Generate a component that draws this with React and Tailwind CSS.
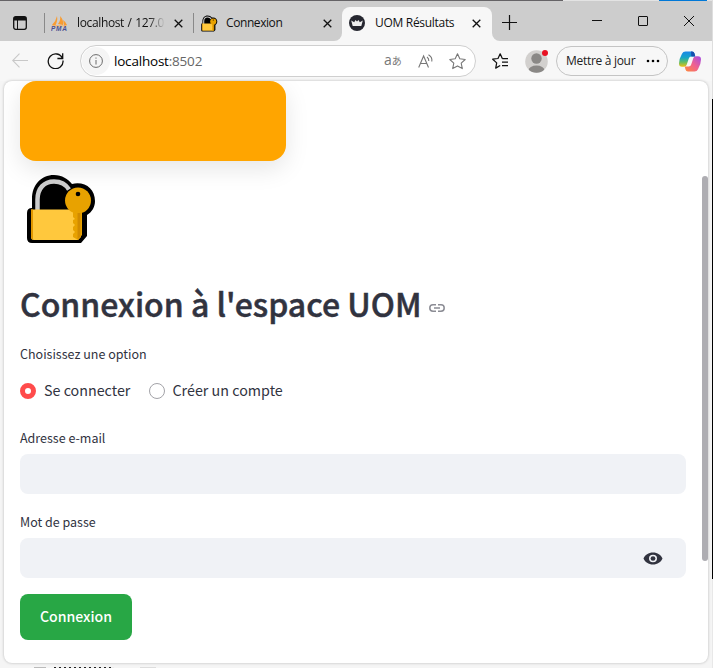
const ui = "font-['Open_Sans','Noto_Sans',sans-serif]";
const body = "font-['Noto_Sans_CJK_SC','Open_Sans',sans-serif]";

function PadlockKey({ className }) {
  return (
    <svg className={className} viewBox="0 0 72 72">
      <path d="M6 35V26C6 12 15 2 28 2c8 0 14 4 18 9 13-3 23 5 23 17 0 6-3 11-8 14v21l-6 7H6q-5 0-5-5V40q0-5 5-5z" fill="#000" />
      <path d="M11.500 38V26.500C11.500 15.500 18 8.500 28 8.500c7 0 12 3 15 8" fill="none" stroke="#ccc" strokeWidth="4.500" />
      <path d="M5 36.500h50v27.500l-3 3H8q-3 0-3-3z" fill="#ffc83d" />
      <path d="M5 36.500h2V67q-2-1-2-3z" fill="#e19600" />
      <circle cx="52" cy="27.500" r="13" fill="#e8a200" />
      <path d="M47 38h9v24l-4 5-5-3v-3l2-2-2-2v-3l2-2-2-2v-3l2-1-2-2z" fill="#e8a200" />
      <path d="M51.500 40h3v24l-3 2z" fill="#d18b00" />
      <circle cx="52" cy="21" r="2.300" fill="#000" />
    </svg>
  );
}

function Close({ className }) {
  return (
    <svg className={className} viewBox="0 0 9 9" fill="none" stroke="#111" strokeWidth="1.300">
      <path d="M.7.7l7.600 7.600M8.300.7L.7 8.300" />
    </svg>
  );
}

function TabBar() {
  return (
    <div className={`relative flex h-[41px] bg-[#cdcdcd] text-[12px] text-[#111] ${ui}`}>
      <div className="absolute left-0 top-0 h-px w-[563px] bg-[#656366]" />
      <div className="absolute left-[563px] top-0 h-px w-[149px] bg-[#e3e3e3]" />
      <div className="absolute left-[659px] top-0 h-px w-[48px] bg-[#0078d7]" />
      <div className="flex h-full w-[44px] items-center pl-[13px] pt-[5px]">
        <svg className="h-[14px] w-[14px]" viewBox="0 0 14 14">
          <rect x=".7" y=".7" width="12.600" height="12.600" rx="2" fill="none" stroke="#111" strokeWidth="1.300" />
          <path d="M1 1h12v3.500H5V13H4V4.500H1z" fill="#111" />
        </svg>
      </div>
      <div className="flex h-full w-[149px] items-center pt-[5px]">
        <div className="h-5 w-px bg-[#898989]" />
        <svg className="ml-[6px] h-[15px] w-[17px]" viewBox="0 0 17 15">
          <path d="M6 0Q7 5 4 10L1 9Q5 5 6 0zM9 0q4 4 3 9l-5-1Q10 4 9 0zM12 4q3 2 4 5l-3 1q0-3-1-6z" fill="#f89c32" />
          <path d="M1 9l15 .5-1 1H3z" fill="#f7b56b" />
          <text x="0" y="15" fontSize="6.500" fontWeight="700" fontStyle="italic" fill="#494f91" textLength="16" fontFamily="Liberation Sans">PMA</text>
        </svg>
        <div className="ml-[9px] w-[88px] whitespace-nowrap bg-gradient-to-r from-[#111] from-80% to-[#cdcdcd] bg-clip-text tracking-[-0.03em] [word-spacing:0.07em] text-transparent">localhost / 127.0</div>
        <Close className="ml-[9px] h-[9px] w-[9px]" />
      </div>
      <div className="flex h-full w-[149px] items-center pt-[5px]">
        <div className="h-5 w-px bg-[#898989]" />
        <PadlockKey className="ml-[7px] h-[17px] w-[17px]" />
        <div className="ml-[8px] w-[88px] whitespace-nowrap tracking-[-0.035em]">Connexion</div>
        <Close className="ml-[9px] h-[9px] w-[9px]" />
      </div>
      <div className="relative mt-[7px] flex h-[34px] w-[150px] items-center rounded-t-lg bg-[#f7f7f7] pb-[2px]">
        <div className="absolute -left-2 bottom-0 h-2 w-2 bg-[#f7f7f7]"><div className="h-2 w-2 rounded-br-lg bg-[#cdcdcd]" /></div>
        <div className="absolute -right-2 bottom-0 h-2 w-2 bg-[#f7f7f7]"><div className="h-2 w-2 rounded-bl-lg bg-[#cdcdcd]" /></div>
        <svg className="ml-[7px] h-4 w-4" viewBox="0 0 16 16">
          <circle cx="8" cy="8" r="8" fill="#262730" />
          <path d="M2.200 5.500l3 1.800L6.500 5 8 6.500 9.500 5l1.300 2.300 3-1.800L12.300 11H3.700z" fill="#eee" />
        </svg>
        <div className="ml-[10px] w-[88px] whitespace-nowrap tracking-[-0.025em]">UOM Résultats</div>
        <Close className="ml-[9px] h-[9px] w-[9px]" />
      </div>
      <svg className="ml-[10px] mt-[15px] h-[15px] w-[15px]" viewBox="0 0 15 15" stroke="#111" strokeWidth="1.200"><path d="M0 7.500h15M7.500 0v15" /></svg>
      <div className="ml-[75px] mt-5 h-px w-[10px] bg-[#111]" />
      <div className="ml-[36px] mt-4 h-[10px] w-[10px] rounded-[1px] border border-[#111]" />
      <svg className="ml-[36px] mt-4 h-[10px] w-[10px]" viewBox="0 0 10 10" stroke="#111"><path d="M0 0l10 10M10 0L0 10" /></svg>
    </div>
  );
}

function Toolbar() {
  return (
    <div className={`flex h-10 items-center bg-[#f7f7f7] ${ui}`}>
      <svg className="ml-3 h-4 w-4" viewBox="0 0 16 16" fill="none" stroke="#c8c8c8" strokeWidth="1.100"><path d="M16 7.500H.7M7.500.7L.7 7.500l6.800 6.800" /></svg>
      <svg className="-mt-px ml-[19px] h-[17px] w-[17px]" viewBox="0 0 17 17" fill="none" stroke="#111" strokeWidth="1.300"><path d="M15.500 6.500A7.400 7.400 0 1 0 16 8.500M15.700 1.200v5.300h-5.300" /></svg>
      <div className="ml-[16px] flex h-8 w-[396px] items-center rounded-full border border-[#cfcfcf] bg-white pl-[1px]">
        <div className="flex h-7 w-7 items-center justify-center rounded-full bg-[#f5f5f5]">
          <svg className="h-[14px] w-[14px]" viewBox="0 0 14 14" fill="none" stroke="#6b6b6b"><circle cx="7" cy="7" r="6.400" /><path d="M7 6v4.500M7 3.500v1.200" /></svg>
        </div>
        <div className="ml-[4px] w-[93px] whitespace-nowrap text-[13.500px] tracking-[-0.015em] text-black">localhost<span className="text-[#666]">:8502</span></div>
        <div className="-mt-[2px] ml-[177px] w-[18px] whitespace-nowrap font-['Open_Sans','Noto_Sans_CJK_JP',sans-serif] text-[14px] leading-4 text-[#777]">a<span className="text-[10px]">あ</span></div>
        <svg className="ml-[16px] h-[15px] w-[16px]" viewBox="0 0 16 15" fill="none" stroke="#777" strokeWidth="1.100"><path d="M.7 13.500L5.600 2l4.900 11.500M2.400 9.500h6.400M9 3q2 1.500 1.800 4M10.500.7Q14.500 3 13.800 7.500" /></svg>
        <svg className="ml-[15px] h-[17px] w-[17px]" viewBox="0 0 17 17" fill="none" stroke="#777" strokeWidth="1.100" strokeLinejoin="round"><path d="M8.500.8l2.300 5 5.400.7-4 3.700 1.100 5.400-4.800-2.700-4.800 2.700 1.100-5.400-4-3.700 5.400-.7z" /></svg>
      </div>
      <svg className="ml-[16px] h-[16px] w-[17px]" viewBox="0 0 17 16" fill="none" stroke="#111" strokeWidth="1.250" strokeLinejoin="round"><path d="M10.300 5.500L8.200.8 6 5.500.7 6.200l4 3.700-1 5.200 4.500-2.600M10.300 5.500H16M10 9h6M10 12.500h6" /></svg>
      <div className="relative ml-[16px] h-[23px] w-[23px]">
        <svg className="h-full w-full" viewBox="0 0 23 23"><defs><clipPath id="avatar"><circle cx="11.500" cy="11.500" r="11.300" /></clipPath></defs><g clipPath="url(#avatar)"><path d="M0 0h23v23H0z" fill="#d2d0ce" /><circle cx="11.500" cy="8.500" r="5.200" fill="#8a8886" /><ellipse cx="11.500" cy="20.500" rx="8" ry="5" fill="#8a8886" /></g></svg>
        <div className="absolute left-[17px] top-0 h-[6px] w-[6px] rounded-full bg-[#e81123]" />
      </div>
      <div className="ml-[8px] flex h-[30px] w-[112px] items-center rounded-full border border-[#c4c4c4] pl-[9px] text-[12px] text-[#222]">
        <span className="w-[71px] whitespace-nowrap tracking-[-0.025em]">Mettre à jour</span>
        <svg className="ml-[9px] h-[4px] w-[14px]" viewBox="0 0 14 4"><circle cx="2" cy="2" r="1.300" /><circle cx="7" cy="2" r="1.300" /><circle cx="12" cy="2" r="1.300" /></svg>
      </div>
      <svg className="ml-[11px] h-[21px] w-[22px]" viewBox="0 0 22 21">
        <defs>
          <linearGradient id="cool" x1="0" y1="0" x2="0" y2="1"><stop offset="0" stopColor="#1a86e8" /><stop offset=".4" stopColor="#16a5c7" /><stop offset=".7" stopColor="#65bd62" /><stop offset="1" stopColor="#f2c011" /></linearGradient>
          <linearGradient id="warm" x1="1" y1="0" x2="0" y2="1"><stop offset="0" stopColor="#a44be6" /><stop offset=".5" stopColor="#f0618f" /><stop offset="1" stopColor="#ff8a38" /></linearGradient>
        </defs>
        <path d="M6.500.5H13q2 0 2.500 2l.8 3h-4q-2 0-2.500 2L7.600 14q-.6 1.800-2.500 1.800H3Q0 15.800 0 12.500 0 8 3 2.800 4 .5 6.500.5z" fill="url(#cool)" />
        <path d="M12 .5h1q2 0 2.500 2l.8 3h-4z" fill="#164fae" />
        <path d="M15.500 20.500H9q-2 0-2.500-2L5.700 15.500h4q2 0 2.500-2L14.400 7q.6-1.800 2.500-1.800H19q3 0 3 3.300 0 4.500-3 9.700-1 2.300-3.500 2.300z" fill="url(#warm)" />
      </svg>
    </div>
  );
}

function Page() {
  return (
    <main className={`relative ml-1 h-[582px] w-[704px] overflow-hidden rounded-lg bg-white pl-4 text-[#31333f] shadow-[0_0_3px_rgba(0,0,0,0.25)] ${body}`}>
      <div className="h-[79.500px] w-[266px] rounded-[16px] bg-[#ffa500] shadow-[0_8px_24px_rgba(0,0,0,0.1)]" />
      <PadlockKey className="ml-[6px] mt-[12.500px] h-[72px] w-[72px]" />
      <div className="mt-[33px] flex h-[50px] items-center">
        <h1 className="w-[401px] whitespace-nowrap text-[32px] font-medium leading-[50px] [-webkit-text-stroke:0.500px_#31333f]">Connexion à l'espace UOM</h1>
        <svg className="ml-[8px] mt-[9px] h-[8px] w-[16px]" viewBox="0 0 16 8" fill="none" stroke="#8b8c94" strokeWidth="1.500"><path d="M7 .8H4a3.200 3.200 0 0 0 0 6.400h3M9 .8h3a3.200 3.200 0 0 1 0 6.400H9M5 4h6" /></svg>
      </div>
      <div className="mt-[15px] h-[22px] whitespace-nowrap text-[12.500px] leading-[22px]">Choisissez une option</div>
      <div className="mt-[14px] flex h-6 items-center text-[14.300px] leading-6">
        <div className="h-4 w-4 rounded-full border-[5px] border-[#ff4b4b] bg-white" />
        <span className="-mt-[2px] ml-2 w-[105px] whitespace-nowrap">Se connecter</span>
        <div className="h-4 w-4 rounded-full border border-[#a3a3a8]" />
        <span className="-mt-[2px] ml-[7.500px] whitespace-nowrap">Créer un compte</span>
      </div>
      <div className="mt-[24px] h-[22px] whitespace-nowrap text-[12.500px] leading-[22px]">Adresse e-mail</div>
      <div className="mt-[5px] h-10 w-[666px] rounded-lg bg-[#f0f2f6]" />
      <div className="mt-[17px] h-[22px] whitespace-nowrap text-[12.500px] leading-[22px]">Mot de passe</div>
      <div className="mt-[5px] flex h-10 w-[666px] items-center justify-end rounded-lg bg-[#f0f2f6] pr-[23px]">
        <svg className="h-[13px] w-5" viewBox="0 0 20 14" preserveAspectRatio="none"><path fillRule="evenodd" d="M10 .5C5.500.5 2 3.200.5 7 2 10.800 5.500 13.500 10 13.500S18 10.800 19.500 7C18 3.200 14.500.5 10 .5zM10 11a4 4 0 1 1 0-8 4 4 0 0 1 0 8z" fill="#31333f" /><circle cx="10" cy="7" r="2.400" fill="#31333f" /></svg>
      </div>
      <button className="mt-4 block h-[46px] w-[112px] rounded-lg bg-[#28a745] pb-[2px] text-[14.100px] font-medium leading-6 text-white">Connexion</button>
      <div className="absolute left-[698px] top-[95px] h-[385px] w-[6px] rounded-full bg-[#aeadb2]" />
    </main>
  );
}

export default function App() {
  return (
    <div className="flex h-[668px] w-[713px] overflow-hidden bg-[#f5f5f5]">
      <div className="w-[712px] shrink-0">
        <TabBar />
        <Toolbar />
        <Page />
        <div className="flex h-[5px] items-end">
          <div className="ml-[34px] h-px w-[12px] bg-[#bbb]" />
          <div className="ml-[8px] h-px w-[60px] bg-[repeating-linear-gradient(90deg,#222_0_2px,#eee_2px_5px)]" />
          <div className="ml-[26px] h-px w-[16px] bg-[#ddd]" />
        </div>
      </div>
      <div className="flex w-px flex-col"><div className="h-[99px] bg-[#dedede]" /><div className="h-[480px] bg-black" /><div className="h-[89px] bg-[#e8e8e8]" /></div>
    </div>
  );
}
